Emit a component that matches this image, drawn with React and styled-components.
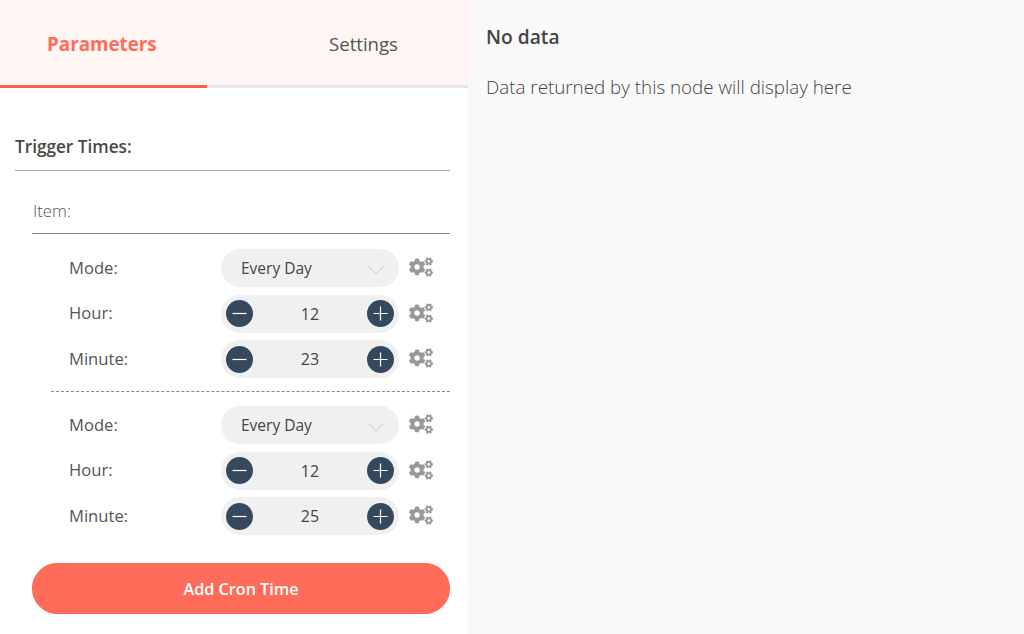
import React from "react";
import styled, { createGlobalStyle } from "styled-components";
import { FaCogs } from "react-icons/fa";

const Global = createGlobalStyle`
  html, body { margin: 0; padding: 0; background: #fff; }
  body { font-family: "Open Sans", "Liberation Sans", sans-serif; color: #444; }
  * { box-sizing: border-box; }
`;

const Page = styled.div`
  display: flex;
  width: 1024px;
  height: 634px;
  overflow: hidden;
`;

const LeftPanel = styled.div`
  width: 468px;
  flex: none;
  background: #fff;
`;

const RightPanel = styled.div`
  flex: 1;
  background: #f9f9f9;
  padding: 25px 18px;
`;

const NoData = styled.div`
  font-size: 19.2px;
  line-height: 24px;
  font-weight: 600;
  color: #444;
`;

const DataHint = styled.div`
  margin-top: 26px;
  font-size: 18.8px;
  line-height: 24px;
  font-weight: 300;
  color: #444;
`;

const Tabs = styled.div`
  display: flex;
  height: 88px;
  background: #fff5f2;
  border-bottom: 3px solid #e4e6ee;
`;

const Tab = styled.div`
  width: ${(p) => p.$width}px;
  height: 88px;
  padding: 31px 0 0 ${(p) => p.$indent}px;
  font-size: ${(p) => (p.$active ? 18.8 : 18.6)}px;
  line-height: 26px;
  font-weight: ${(p) => (p.$active ? 700 : 400)};
  color: ${(p) => (p.$active ? "#ff6d5a" : "#555")};
  border-bottom: 3px solid ${(p) => (p.$active ? "#ff5f4b" : "transparent")};
`;

const Body = styled.div`
  padding: 44px 18px 0 15px;
`;

const SectionTitle = styled.div`
  height: 39px;
  padding-top: 4px;
  font-size: 17.2px;
  line-height: 22px;
  font-weight: 600;
  color: #484848;
  border-bottom: 1px solid #a8a8a8;
`;

const Collection = styled.div`
  margin-left: 17px;
`;

const ItemTitle = styled.div`
  height: 63px;
  padding: 30px 0 0 1px;
  font-size: 16.8px;
  line-height: 20px;
  font-weight: 300;
  color: #555;
  border-bottom: 1px solid #888;
`;

const Group = styled.div`
  margin-left: 19px;
  padding-top: ${(p) => (p.$first ? "15px" : "14px")};
  border-top: ${(p) => (p.$first ? "none" : "1px dashed #888")};
  display: flex;
  flex-direction: column;
  gap: 7.5px;
  height: ${(p) => (p.$first ? "157px" : "auto")};
`;

const Row = styled.div`
  display: flex;
  align-items: center;
  height: 38px;
`;

const Label = styled.div`
  flex: 0 0 170px;
  padding: 0 0 1px 18px;
  font-size: 16.6px;
  line-height: 20px;
  font-weight: 400;
  color: #555;
`;

const SelectBox = styled.div`
  width: 178px;
  height: 38px;
  border-radius: 19px;
  background: #f0f0f0;
  display: flex;
  align-items: center;
  justify-content: space-between;
  padding: 0 15px 0 20px;
  font-size: 15.5px;
  color: #444;
`;

const SelectText = styled.span`
  margin-bottom: 1px;
`;

const Stepper = styled.div`
  width: 178px;
  height: 38px;
  border-radius: 19px;
  background: #f0f0f0;
  display: flex;
  align-items: center;
  justify-content: space-between;
  padding: 0 5px;
  font-size: 16px;
  color: #444;
`;

const RoundButton = styled.div`
  width: 27px;
  height: 27px;
  border-radius: 50%;
  background: #35495e;
  display: flex;
  align-items: center;
  justify-content: center;
`;

const Cogs = styled(FaCogs)`
  margin: 0 0 2px 10px;
  width: 24px;
  height: 20px;
  color: #999;
`;

const AddButton = styled.div`
  margin-top: 28px;
  height: 51px;
  border-radius: 25px;
  background: #ff6d5a;
  border: 1px solid #ff6450;
  color: #fff;
  font-size: 16.2px;
  font-weight: 600;
  display: flex;
  align-items: center;
  justify-content: center;
`;

const ChevronIcon = styled.svg`
  margin-top: 4px;
`;

const Minus = () => (
  <svg width="15" height="15" viewBox="0 0 15 15">
    <path d="M0.5 7.5H14.5" stroke="#fff" strokeWidth="1.2" />
  </svg>
);

const Plus = () => (
  <svg width="15" height="15" viewBox="0 0 15 15">
    <path d="M0.5 7.5H14.5M7.5 0.5V14.5" stroke="#fff" strokeWidth="1.2" />
  </svg>
);

const Chevron = () => (
  <ChevronIcon width="16" height="9" viewBox="0 0 16 9">
    <path d="M0.5 0.5L8 8L15.5 0.5" fill="none" stroke="#c4c7cf" strokeWidth="1" />
  </ChevronIcon>
);

const ModeRow = () => (
  <Row>
    <Label>Mode:</Label>
    <SelectBox>
      <SelectText>Every Day</SelectText>
      <Chevron />
    </SelectBox>
    <Cogs />
  </Row>
);

const NumberRow = ({ label, value }) => (
  <Row>
    <Label>{label}</Label>
    <Stepper>
      <RoundButton><Minus /></RoundButton>
      <span>{value}</span>
      <RoundButton><Plus /></RoundButton>
    </Stepper>
    <Cogs />
  </Row>
);

export default function App() {
  return (
    <Page>
      <Global />
      <LeftPanel>
        <Tabs>
          <Tab $active $width={207} $indent={47}>Parameters</Tab>
          <Tab $width={261} $indent={122}>Settings</Tab>
        </Tabs>
        <Body>
          <SectionTitle>Trigger Times:</SectionTitle>
          <Collection>
            <ItemTitle>Item:</ItemTitle>
            <Group $first>
              <ModeRow />
              <NumberRow label="Hour:" value="12" />
              <NumberRow label="Minute:" value="23" />
            </Group>
            <Group>
              <ModeRow />
              <NumberRow label="Hour:" value="12" />
              <NumberRow label="Minute:" value="25" />
            </Group>
            <AddButton>Add Cron Time</AddButton>
          </Collection>
        </Body>
      </LeftPanel>
      <RightPanel>
        <NoData>No data</NoData>
        <DataHint>Data returned by this node will display here</DataHint>
      </RightPanel>
    </Page>
  );
}
